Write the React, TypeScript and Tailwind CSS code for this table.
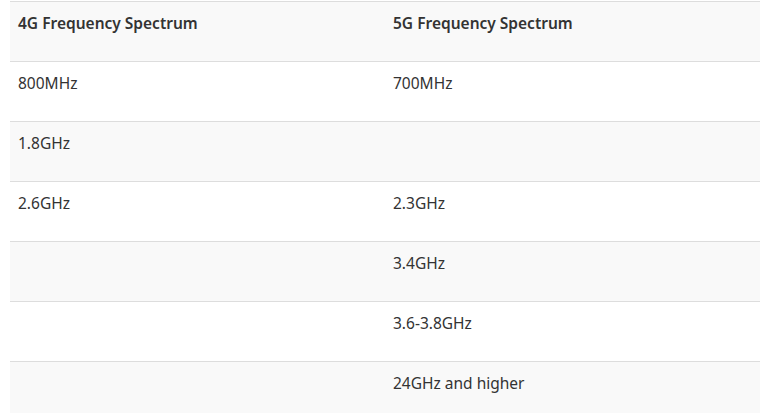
const rows: [string, string][] = [
  ["800MHz", "700MHz"],
  ["1.8GHz", ""],
  ["2.6GHz", "2.3GHz"],
  ["", "3.4GHz"],
  ["", "3.6-3.8GHz"],
  ["", "24GHz and higher"],
];

export default function App() {
  return (
    <div className="min-h-screen bg-white px-[10px] pt-px font-['Noto_Sans',sans-serif] text-[15.5px] leading-[26px] text-[#333]">
      <table className="w-[750px] table-fixed border-collapse">
        <thead>
          <tr className="bg-[#f9f9f9]">
            <th className="h-[60px] border-t border-[#ddd] px-2 pt-2 text-left align-top font-semibold">
              4G Frequency Spectrum
            </th>
            <th className="h-[60px] border-t border-[#ddd] px-2 pt-2 text-left align-top font-semibold">
              5G Frequency Spectrum
            </th>
          </tr>
        </thead>
        <tbody>
          {rows.map(([a, b], i) => (
            <tr key={i} className={i % 2 === 1 ? "bg-[#f9f9f9]" : "bg-white"}>
              <td className="h-[60px] border-t border-[#ddd] px-2 pt-2 align-top">{a}</td>
              <td className="h-[60px] border-t border-[#ddd] px-2 pt-2 align-top">{b}</td>
            </tr>
          ))}
        </tbody>
      </table>
    </div>
  );
}
